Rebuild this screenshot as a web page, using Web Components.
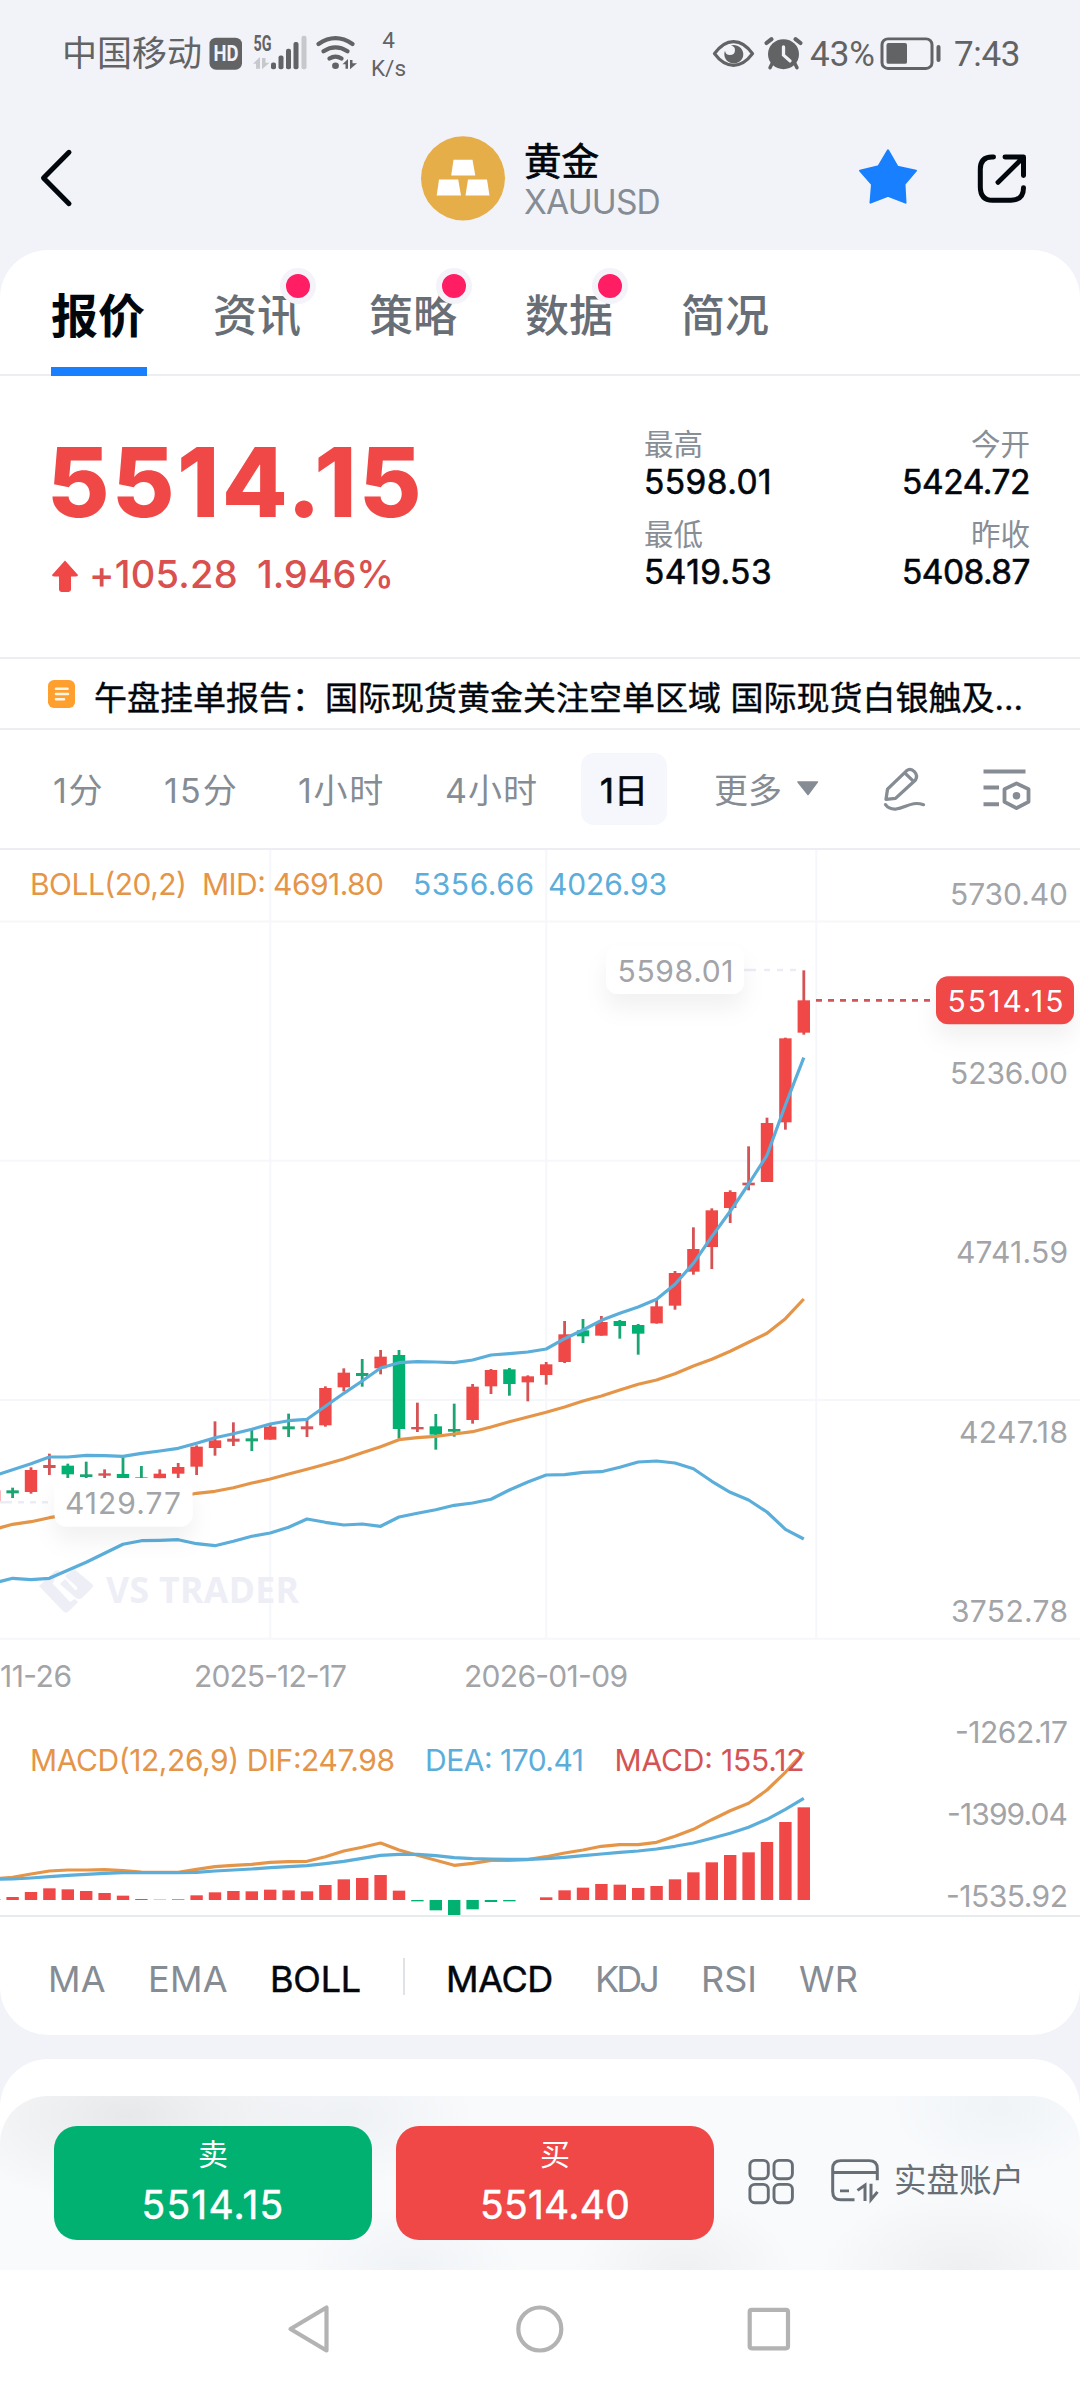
<!DOCTYPE html>
<html lang="zh-CN">
<head>
<meta charset="utf-8">
<title>XAUUSD</title>
<style>
html,body{margin:0;padding:0}
body{width:1080px;height:2388px;overflow:hidden;background:#f2f3f8;color:#02070d;font-family:Inter,"Noto Sans CJK SC",sans-serif}
</style>
</head>
<body>
<quote-app></quote-app>
<script>
const define=(name,html,after)=>customElements.define(name,class extends HTMLElement{
  connectedCallback(){
    if(this.shadowRoot)return;
    const t=document.createElement('template');
    t.innerHTML=typeof html==='function'?html(this):html;
    this.attachShadow({mode:'open'}).appendChild(t.content.cloneNode(true));
    if(after)after(this);
  }
});

/* Single-line label whose tracking is adjusted to fill the width in "w". */
define('fit-text',el=>`<style>
:host{display:block;flex:none;width:${el.getAttribute('w')}px;white-space:nowrap;line-height:1.2}
span{display:inline-block}
</style><span><slot></slot></span>`,el=>{
  const s=el.shadowRoot.querySelector('span');
  const n=[...el.textContent].length;
  s.style.letterSpacing=((+el.getAttribute('w')-s.getBoundingClientRect().width)/n)+'px';
});

define('status-bar',`<style>
:host{display:flex;align-items:center;height:107px;margin-bottom:-1px;color:#626365;font-family:Roboto,"Noto Sans CJK SC",sans-serif}
svg{display:block;flex:none}
.carrier{width:144px;padding-left:62px;font-size:35px;line-height:40px;margin-top:3px}
.net{display:flex;flex-direction:column;align-items:center;width:43px;margin-left:5px;font-size:22.500px;line-height:28px;margin-top:1px}
.right{display:flex;align-items:center;margin-left:auto;padding-right:60px}
fit-text{font-size:35px;margin-top:3px}
</style>
<div class="carrier">中国移动</div>
<svg width="156" height="48.400" viewBox="206 30 156 50" preserveAspectRatio="none">
 <rect x="209.500" y="39" width="32.500" height="33" rx="6.500" fill="#626365"/>
 <text x="213.500" y="63.500" font-size="22.500" font-weight="700" fill="#f2f3f8" font-family="Roboto" textLength="25" lengthAdjust="spacingAndGlyphs">HD</text>
 <text x="253.500" y="53" font-size="22" font-weight="700" fill="#626365" font-family="Roboto" textLength="18" lengthAdjust="spacingAndGlyphs">5G</text>
 <g fill="#c6c8cc"><path d="M253 66L260 59V71H256V66ZM262 60H265.500V65H269.500L262 71.500Z"/><rect x="301.500" y="37" width="5" height="34.500" rx="2"/></g>
 <g fill="#626365"><rect x="271" y="64.500" width="5" height="7" rx="2"/><rect x="278.500" y="57.500" width="5" height="14" rx="2"/><rect x="286" y="50.500" width="5" height="21" rx="2"/><rect x="293.500" y="43.500" width="5" height="28" rx="2"/></g>
 <g fill="none" stroke="#626365" stroke-width="4.300" stroke-linecap="round"><path d="M318.500 45.500Q335.500 33.500 352.500 45.500M323.500 53Q335.500 45 347.500 53M329.500 60.500Q335.500 56.500 341.500 60.500"/></g>
 <circle cx="335.500" cy="68" r="3.400" fill="#626365"/><path d="M342.500 66.500L348 61V71H345.500V66.500ZM350 62H352.500V65.500H357L350 71.500Z" fill="#626365"/>
</svg>
<div class="net"><span>4</span><span>K/s</span></div>
<div class="right">
<svg width="99" height="48.400" viewBox="712 30 99 50" preserveAspectRatio="none">
 <path d="M715.500 55.500Q724 43 734.500 43T753.500 55.500Q745 67.500 734.500 67.500T715.500 55.500Z" fill="none" stroke="#626365" stroke-width="3.300" stroke-linejoin="round"/>
 <path d="M726 52.500A9.500 9.500 0 1 0 732 47A5 5 0 1 1 726 52.500Z" fill="#626365"/>
 <circle cx="784.500" cy="56" r="15.500" fill="#626365"/><path d="M767.500 44.500L772.500 40.500M801.500 44.500L796.500 40.500" stroke="#626365" stroke-width="4.200" stroke-linecap="round"/><path d="M773 66L771 70M796 66L798 70" stroke="#626365" stroke-width="3.500" stroke-linecap="round"/>
 <path d="M784.500 48.500V57L791 63" fill="none" stroke="#f2f3f8" stroke-width="3.300" stroke-linecap="round"/>
</svg>
<fit-text w="65" style="margin-right:2px">43%</fit-text>
<svg width="77" height="48.400" viewBox="878 30 77 50" preserveAspectRatio="none"><rect x="883" y="40.200" width="50" height="30.600" rx="6" fill="none" stroke="#626365" stroke-width="3"/><rect x="887.500" y="44.500" width="20.500" height="21.500" rx="2" fill="#626365"/><rect x="937.500" y="46.500" width="4" height="17.500" rx="2" fill="#626365"/></svg>
<fit-text w="66">7:43</fit-text>
</div>`);

define('app-header',`<style>
:host{display:flex;align-items:flex-start;height:144px}
svg{display:block;flex:none}
.back{margin:38px 0 0 34px}
.gold{margin:28px 0 0 341px}
.name{display:flex;flex-direction:column;width:140px;margin:35px 0 0 17px}
b{font-size:37.500px;line-height:42px;font-weight:400;-webkit-text-stroke:.7px}
fit-text{font-size:33.500px;line-height:40px;margin-top:-1px;color:#858c94}
.star{margin:37px 0 0 192px}
.share{margin:43px 0 0 54px}
</style>
<svg class="back" width="44" height="68" viewBox="34 149 44 70" preserveAspectRatio="none"><path d="M69 157.500L43.500 184L69 210.500" fill="none" stroke="#02070d" stroke-width="5" stroke-linecap="round" stroke-linejoin="round"/></svg>
<svg class="gold" width="88" height="89" viewBox="419 138 88 92" preserveAspectRatio="none"><ellipse cx="463" cy="183.800" rx="42" ry="43.500" fill="#e5ae49"/><path d="M453.500 164.500H472.500L475.300 181H451.200ZM439 185H458.200L461 201.500H436.700ZM468 185H487L489.500 201.500H465.500Z" fill="#fff"/></svg>
<div class="name"><b>黄金</b><fit-text w="136">XAUUSD</fit-text></div>
<svg class="star" width="64" height="66" viewBox="856 148 64 68" preserveAspectRatio="none"><path d="M888 155.500L897.500 172.500L916 176.500L904.500 190.500L905.500 209.500L888 202.500L870.500 209.500L872 190.500L860 176.500L878.500 172Z" fill="#187fff" stroke="#187fff" stroke-width="2" stroke-linejoin="round"/></svg>
<svg class="share" width="56" height="58" viewBox="974 154 56 60" preserveAspectRatio="none"><path d="M993.500 162.300H992Q980.300 162.300 980.300 175V193Q980.300 207 992.500 207H1011Q1023.500 207 1023.500 194M1005 162.300H1023.500V181.500M1022 164L998 188.500" fill="none" stroke="#02070d" stroke-width="5" stroke-linecap="round" stroke-linejoin="round"/></svg>`);

define('tab-item',el=>`<style>
:host{display:flex;position:relative;align-items:flex-start;width:88px;height:126px;margin-right:${el.getAttribute('gap')||68}px;color:#686e76;font-size:44px;line-height:60px;font-weight:500;box-sizing:border-box;padding-top:36px;white-space:nowrap}
:host([on]){width:96px;color:#02070d;font-size:47px;font-weight:700;border-bottom:9px solid #187fff}
i{display:none;position:absolute;left:67px;top:18px;width:24px;height:24px;border:6px solid #f3f3f9;border-radius:50%;background:#ff1d63}
:host([dot]) i{display:block}
</style><slot></slot><i></i>`);

define('tab-row',`<style>
:host{display:flex;height:124px;border-bottom:2px solid #eceef2;padding-left:51px}
</style>
<tab-item on gap="66">报价</tab-item><tab-item dot>资讯</tab-item><tab-item dot>策略</tab-item><tab-item dot>数据</tab-item><tab-item>简况</tab-item>`);

define('stat-cell',el=>`<style>
:host{display:flex;flex-direction:column;align-items:flex-start}
:host([end]){align-items:flex-end}
span{font-size:29.500px;line-height:38px;color:#878e96;white-space:nowrap}
fit-text{font-size:33.500px;line-height:38px;font-weight:400;-webkit-text-stroke:.6px;color:#02070d}
</style><span><slot></slot></span><fit-text w="128">${el.getAttribute('value')}</fit-text>`);

define('quote-panel',`<style>
:host{display:flex;height:283px;border-bottom:2px solid #eceef2;box-sizing:border-box}
.price{width:597px;padding:52px 0 0 47px;color:#f04747}
.big{font-size:96px;line-height:108px;font-weight:800}
.chg{display:flex;align-items:center;height:48px;margin:15px 0 0 3px}
.chg fit-text{font-size:38px;font-weight:500;color:#d9504f}
svg{display:block;margin-right:9px}
.g{margin-left:19px}
.stats{display:grid;grid-template-columns:193px 193px;grid-auto-rows:90px;margin-top:49px}
</style>
<div class="price"><fit-text class="big" w="377">5514.15</fit-text>
<div class="chg"><svg width="30" height="35" viewBox="51 562 30 36" preserveAspectRatio="none"><path d="M66 564.500L79 579.500Q79 581 77 581H72V594.500Q72 597 69.500 597H62.500Q60 597 60 594.500V581H55Q53 581 53 579.500Z" fill="#f04747"/></svg><fit-text w="149">+105.28</fit-text><fit-text class="g" w="137">1.946%</fit-text></div></div>
<div class="stats"><stat-cell value="5598.01">最高</stat-cell><stat-cell end value="5424.72">今开</stat-cell><stat-cell value="5419.53">最低</stat-cell><stat-cell end value="5408.87">昨收</stat-cell></div>`);

define('news-line',`<style>
:host{display:flex;align-items:center;height:71px;border-bottom:2px solid #eceef2;box-sizing:border-box;padding-left:48px}
svg{display:block;margin:0 19px 0 0}
fit-text{font-size:33px;-webkit-text-stroke:.4px;margin-top:10px}
</style>
<svg width="27" height="28" viewBox="0 0 27 29" preserveAspectRatio="none"><rect width="27" height="29" rx="6" fill="#ff9f2e"/><path d="M8 9H19.500M8 14.500H20M8 20H16" stroke="#fff5e6" stroke-width="2.600" stroke-linecap="round"/></svg>
<fit-text w="929">午盘挂单报告：国际现货黄金关注空单区域 国际现货白银触及…</fit-text>`);

define('period-row',`<style>
:host{display:flex;align-items:center;height:120px;border-bottom:2px solid #eceef2;box-sizing:border-box;color:#858c94;font-size:34px;padding-left:53px}
fit-text{line-height:50px;margin-top:4px}
.on{display:flex;justify-content:center;align-items:center;width:86px;height:72px;border-radius:13px;background:#f5f7fc;color:#02070d;margin-left:43px}
.on fit-text{-webkit-text-stroke:.7px}
svg{display:block}
</style>
<fit-text w="51">1分</fit-text><fit-text w="75" style="margin-left:60px">15分</fit-text><fit-text w="87" style="margin-left:59px">1小时</fit-text><fit-text w="93" style="margin-left:60px">4小时</fit-text>
<div class="on"><fit-text w="48">1日</fit-text></div>
<fit-text w="68" style="margin-left:47px">更多</fit-text>
<svg width="24" height="17.500" viewBox="798 795 24 18" preserveAspectRatio="none" style="margin-left:14px"><path d="M800 797H819.500L810 810Z" fill="#858c94" stroke="#858c94" stroke-width="1.500" stroke-linejoin="round"/></svg>
<svg width="50" height="48.400" viewBox="882 776 50 50" preserveAspectRatio="none" style="margin-left:60px"><g fill="none" stroke="#858c94" stroke-width="3.300" stroke-linejoin="round" stroke-linecap="round"><path d="M888 811.500L889.500 801L908.500 782Q912.500 778.500 916.500 783Q920 787 917.500 791.500L897.500 810.500ZM907 784.500L915.500 793"/><path d="M887.500 817Q891 822 898 821.500C908 820 914 813 925.500 817"/></g></svg>
<svg width="54" height="48.400" viewBox="981 776 54 50" preserveAspectRatio="none" style="margin-left:49px"><g fill="none" stroke="#858c94" stroke-width="3.800"><path d="M985.500 782.700H1027.500M985.500 799.200H1001M985.500 816.500H1001" stroke-width="4"/><path d="M1018.500 795L1030.500 801V814L1018.500 820.500L1006.500 814V801Z" stroke-linejoin="round"/></g><circle cx="1018.500" cy="807.800" r="3.800" fill="#858c94"/></svg>`);

/* Candles: [direction, high, body top, body bottom, low], one every 18.4 units */
const PITCH=18.4,X0=31,px=i=>X0+PITCH*i;
const f=(o,k,a)=>a.map(v=>o+v/k);
const C5=(d,...a)=>[d,...f(1300,3,a)],C6=(d,...a)=>[d,...f(1200,3,a)],C7=(d,...a)=>[d,...f(930,3,a)];
const candles=[
C5(1,571,571,603,603),C5(0,563,571,580,594),C5(1,502,510,576,581),C5(1,461,495,504,525),C5(0,491,497,523,534),C5(0,485,523,531,534),C5(1,508,520,527,534),C5(0,470,522,534,534),C5(0,498,532,534,534),C5(1,508,521,535,535),C5(1,489,501,521,534),C5(1,436,440,500,525),C5(1,364,421,444,467),C5(1,367,416,425,438),C5(0,386,415,424,453),C5(1,374,380,419,419),C5(0,341,379,388,411),C5(1,357,379,388,411),C5(1,259,264,376,380),C5(1,205,218,262,274),C5(0,177,219,228,260),C5(1,150,170,205,223),C5(0,150,165,387,416),
C6(1,608,681,688,696),C6(0,642,679,704,749),C6(0,611,687,695,710),C6(1,552,560,660,671),C6(1,507,510,559,582),C6(0,504,508,552,587),C6(1,526,529,547,604),C6(1,486,493,525,554),C6(1,363,403,486,489),C6(0,357,391,409,429),C6(1,348,366,407,407),C6(0,360,363,378,416),C6(0,372,375,401,464),C6(1,298,319,370,371),C6(1,213,219,317,329),C6(1,82,147,215,224),C6(1,25,31,141,207),
C7(1,781,786,834,879),C7(1,649,758,766,781),C7(1,563,579,756,756),C7(1,323,325,577,599),C7(1,121,211,308,314)];
const upper=[...f(1300,3,[527,509,491,471,471,466,467,469,460,453,445,430,413,401,388,372,362,358,319,280,243,204,188,185]),...f(1200,3,[486,488,480,465,461,456,447,416,390,361,340,321,298,253,190,110,34]),...f(930,3,[762,676,525,383])];
const mid=[...f(1300,3,[688,673,665,653,644,635,626,617,608,599,591,580,574,563,549,537,522,508,493,477,458,440,419]),...f(1200,3,[713,709,702,695,681,665,651,637,621,603,588,570,553,540,521,498,478,454,427,400,356,297])];
const lower=[...f(1300,3,[849,835,839,835,811,787,760,733,722,721,719,731,737,724,709,699,682,657,667,675,672,679,651]),...f(1430,3,[250,239,226,219,208,180,156,135,134,127,125,112,96,93,99,116,154,187,210,246,298,327])];
const bars=[597,591,576,565,568,573,579,587,597,599,598,586,577,573,574,569,571,574,555,538,534,525,572,604,631,645,628,606,604,600,592,571,563,552,554,564,558,538,517,487,465,457,426,366,322];
const dif=f(1700,3,[537,532,522,513,510,510,509,512,516,517,517,508,500,496,493,487,485,484,470,453,442,429,450,466,481,496,490,481,481,479,470,459,450,439,434,434,427,409,388,359,332,310,270,217,156]);
const dea=f(1700,3,[538,537,534,530,526,523,520,518,518,518,518,517,513,510,507,503,500,497,491,484,475,466,463,463,467,473,476,477,478,478,476,472,467,462,457,453,447,439,429,415,400,382,358,328,295]);
const line=(a,c)=>`<polyline points="${a.map((y,i)=>px(i-2).toFixed(1)+','+y.toFixed(1)).join(' ')}" fill="none" stroke="${c}" stroke-width="3.200" stroke-linejoin="round"/>`;
const RED='#f04747',GREEN='#00b172',ORANGE='#e59548',BLUE='#5badda';
const T=(x,y,w,s,c,extra='')=>`<text x="${x}" y="${y}" textLength="${w}" fill="${c}" ${extra}>${s}</text>`;
const R=(y,w,s)=>T(1068-w,y,w,s,'#a2a4a8');

define('price-chart',()=>`<style>
:host{display:block;height:1065px;border-bottom:2px solid #e7ebed}
svg{display:block;font:30px Inter,sans-serif}
</style>
<svg width="1080" height="1065" viewBox="0 850 1080 1065">
<defs><filter id="sh" x="-30%" y="-40%" width="160%" height="260%"><feDropShadow dx="0" dy="14" stdDeviation="11" flood-color="#000" flood-opacity=".055"/></filter></defs>
<path d="M0 921.500H1080M0 1160.700H1080M0 1400H1080M0 1638.700H1080M270.300 850V1638.700M546.300 850V1638.700M816.300 850V1638.700" stroke="#f5f7fb" stroke-width="2"/>
<path d="M39 1586L54 1572Q56 1569 60 1571L58 1573L52.500 1583.500L70 1602L75 1599L78 1602L69 1611Q66 1614 63 1611ZM65 1576L74 1569L92 1584Q94 1586 92 1588L82 1598Q79 1600 76 1598L60 1584L65 1579L75 1590Q78 1590 77 1587Z" fill="#edeef6"/>
${T(106,1603,193,'VS TRADER','#edeef6','font-family="Open Sans" font-weight="700" font-size="35.500"')}
<path d="M0 1502.300H12M18 1502.300H24M30 1502.300H36M42 1502.300H48M744 970H756M764 970H770M777 970H783M790 970H796" stroke="#eaedf6" stroke-width="2.600"/>
${candles.map((c,i)=>{const x=px(i-2),col=c[0]?RED:GREEN,w=c[0]?'#d55354':'#1ba572';return `<path d="M${x} ${c[1]}V${c[4]}" stroke="${w}" stroke-width="2.800"/><rect x="${x-6.2}" y="${c[2]}" width="12.400" height="${c[3]-c[2]}" fill="${c[3]-c[2]<3.2?w:col}"/>`}).join('')}
${line(upper,BLUE)}${line(mid,ORANGE)}${line(lower,BLUE)}
<g filter="url(#sh)"><rect x="54.500" y="1478.500" width="138" height="48" rx="12" fill="#fff"/><rect x="606" y="946" width="138" height="48" rx="12" fill="#fff"/><rect x="936" y="976.300" width="138" height="48" rx="12" fill="${RED}"/></g>
<path d="M816 1000.300H936" stroke="#cf5557" stroke-width="2.800" stroke-dasharray="6 6"/>
${T(65,1514.3,116,'4129.77','#a2a4a8')}${T(617.5,982.3,116,'5598.01','#a2a4a8')}${T(947.5,1012,116,'5514.15','#fff')}
${T(30,895,157,'BOLL(20,2)',ORANGE)}${T(202,895,182,'MID: 4691.80',ORANGE)}${T(413,895,121,'5356.66',BLUE)}${T(548,895,119,'4026.93',BLUE)}
${R(904.5,118,'5730.40')}${R(1083.7,118,'5236.00')}${R(1263,112,'4741.59')}${R(1442.5,109,'4247.18')}${R(1622,117,'3752.78')}
${T(0,1687.3,72,'11-26','#a2a4a8')}${T(194,1687.3,153,'2025-12-17','#a2a4a8')}${T(464,1687.3,164,'2026-01-09','#a2a4a8')}
${bars.map((v,i)=>{const h=(600-v)/3,x=px(i-2)-6.2;return v===600?'':`<rect x="${x}" y="${h>0?1900-h:1900}" width="12.400" height="${Math.abs(h)}" fill="${h>0?RED:GREEN}"/>`}).join('')}
${line(dif,ORANGE)}${line(dea,BLUE)}
${T(30,1771,365,'MACD(12,26,9) DIF:247.98',ORANGE)}${T(425,1771,159,'DEA: 170.41',BLUE)}${T(614.5,1771,190,'MACD: 155.12','#d55354')}
${R(1743.3,113,'-1262.17')}${R(1825.3,121,'-1399.04')}${R(1907.3,122,'-1535.92')}
</svg>`);

define('indicator-row',`<style>
:host{display:flex;align-items:center;height:118px;padding:8px 0 0 48px;box-sizing:border-box;font-size:36px;color:#858c94}
fit-text{margin-right:42px}
.on{color:#02070d;-webkit-text-stroke:.5px}
i{width:2px;height:37px;background:#dfe2e6;margin-right:41px;margin-top:-8px}
</style>
<fit-text w="58">MA</fit-text><fit-text w="80">EMA</fit-text><fit-text class="on" w="91">BOLL</fit-text><i></i><fit-text class="on" w="107">MACD</fit-text><fit-text w="62" style="margin-right:44px">KDJ</fit-text><fit-text w="56">RSI</fit-text><fit-text w="59">WR</fit-text>`);

define('trade-button',el=>`<style>
:host{display:flex;flex-direction:column;align-items:center;width:318px;height:114px;border-radius:23px;color:#fff;background:${el.getAttribute('color')};flex:none}
span{font-size:30px;line-height:40px;margin-top:8px}
fit-text{font-size:39px;line-height:48px;-webkit-text-stroke:.5px;margin-top:7px}
</style><span><slot></slot></span><fit-text w="${el.getAttribute('w')}">${el.getAttribute('price')}</fit-text>`);

define('trade-bar',`<style>
:host{display:flex;align-items:flex-start;height:174px;box-sizing:border-box;padding:30px 0 0 54px;border-radius:48px 48px 0 0;
background:radial-gradient(ellipse 190px 90px at 130px 20px,rgba(224,226,228,.75),transparent),radial-gradient(ellipse 130px 70px at 345px 20px,rgba(236,239,242,.8),transparent),radial-gradient(ellipse 110px 60px at 410px 170px,rgba(238,241,244,.8),transparent),radial-gradient(ellipse 110px 70px at 685px 174px,rgba(237,239,241,.9),transparent),radial-gradient(ellipse 140px 80px at 960px 174px,rgba(236,238,240,.9),transparent),radial-gradient(ellipse 110px 70px at 1000px 10px,rgba(239,243,246,.9),transparent),#f8fafc}
trade-button{margin-right:24px}
svg{display:block;flex:none}
.grid{margin:31px 0 0 8px}
.acct{margin:31px 0 0 33px}
span{font-size:32.500px;line-height:44px;color:#686e76;margin:33px 0 0 13px;white-space:nowrap}
</style>
<trade-button color="#00b172" w="143" price="5514.15">卖</trade-button>
<trade-button color="#f04747" w="150" price="5514.40">买</trade-button>
<svg class="grid" width="50" height="50" viewBox="746 2157 50 50"><g fill="none" stroke="#686e76" stroke-width="2.900"><rect x="749.900" y="2160.400" width="18.400" height="18.400" rx="5"/><rect x="774" y="2160.400" width="18.400" height="18.400" rx="5"/><rect x="749.900" y="2184.400" width="18.400" height="18.400" rx="5"/><rect x="774" y="2184.400" width="18.400" height="18.400" rx="5"/></g></svg>
<svg class="acct" width="52" height="46.500" viewBox="829 2161 52 48" preserveAspectRatio="none"><g fill="none" stroke="#686e76" stroke-width="3"><path d="M854.500 2205.200H841Q832.700 2205.200 832.700 2196.500V2173Q832.700 2164.700 841 2164.700H869Q877.300 2164.700 877.300 2173V2185M832.700 2177H877.300M840 2196H849M857.500 2195.500L865 2190V2206.500M871 2188.500V2205L877.500 2197"/></g></svg>
<span>实盘账户</span>`);

define('nav-bar',`<style>
:host{display:block;height:118px;background:#fff}
svg{display:block}
</style><svg width="1080" height="118" viewBox="0 2270 1080 118"><g fill="none" stroke="#b3b3b3" stroke-width="4.200" stroke-linejoin="round"><path d="M290.500 2329L326.500 2307.500V2350.500Z"/><circle cx="539.800" cy="2329" r="21.500"/><rect x="749.700" y="2309.800" width="38.300" height="38.500" rx="2"/></g></svg>`);

define('quote-app',`<style>
:host{display:flex;flex-direction:column;width:1080px;height:2388px;background:#f2f3f8}
.card{display:flex;flex-direction:column;background:#fff;border-radius:48px;height:1785px;overflow:hidden;flex:none}
.next{background:#fff;border-radius:48px 48px 0 0;padding-top:37px;margin-top:24px}
</style>
<status-bar></status-bar><app-header></app-header>
<section class="card"><tab-row></tab-row><quote-panel></quote-panel><news-line></news-line><period-row></period-row><price-chart></price-chart><indicator-row></indicator-row></section>
<section class="next"><trade-bar></trade-bar></section>
<nav-bar></nav-bar>`);
</script>
</body>
</html>
